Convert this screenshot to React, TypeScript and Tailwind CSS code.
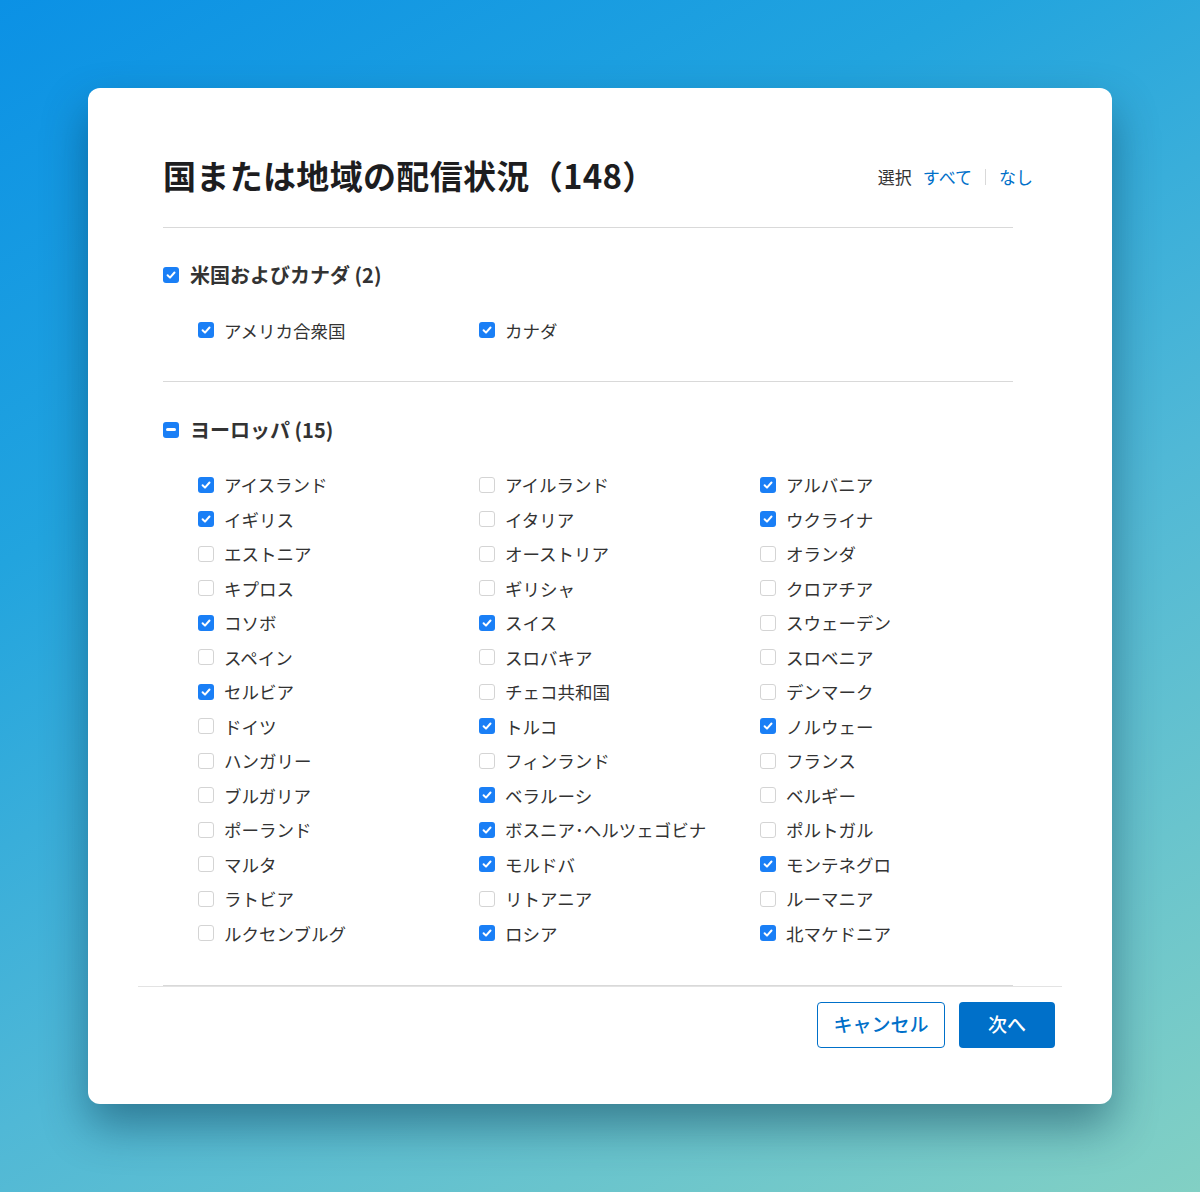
import React from "react";

type Item = { name: string; on: boolean };

const europe: Item[] = [
  { name: "アイスランド", on: true },
  { name: "アイルランド", on: false },
  { name: "アルバニア", on: true },
  { name: "イギリス", on: true },
  { name: "イタリア", on: false },
  { name: "ウクライナ", on: true },
  { name: "エストニア", on: false },
  { name: "オーストリア", on: false },
  { name: "オランダ", on: false },
  { name: "キプロス", on: false },
  { name: "ギリシャ", on: false },
  { name: "クロアチア", on: false },
  { name: "コソボ", on: true },
  { name: "スイス", on: true },
  { name: "スウェーデン", on: false },
  { name: "スペイン", on: false },
  { name: "スロバキア", on: false },
  { name: "スロベニア", on: false },
  { name: "セルビア", on: true },
  { name: "チェコ共和国", on: false },
  { name: "デンマーク", on: false },
  { name: "ドイツ", on: false },
  { name: "トルコ", on: true },
  { name: "ノルウェー", on: true },
  { name: "ハンガリー", on: false },
  { name: "フィンランド", on: false },
  { name: "フランス", on: false },
  { name: "ブルガリア", on: false },
  { name: "ベラルーシ", on: true },
  { name: "ベルギー", on: false },
  { name: "ポーランド", on: false },
  { name: "ボスニア･ヘルツェゴビナ", on: true },
  { name: "ポルトガル", on: false },
  { name: "マルタ", on: false },
  { name: "モルドバ", on: true },
  { name: "モンテネグロ", on: true },
  { name: "ラトビア", on: false },
  { name: "リトアニア", on: false },
  { name: "ルーマニア", on: false },
  { name: "ルクセンブルグ", on: false },
  { name: "ロシア", on: true },
  { name: "北マケドニア", on: true },
];

const na: Item[] = [
  { name: "アメリカ合衆国", on: true },
  { name: "カナダ", on: true },
];

function Box({ state }: { state: "on" | "off" | "mixed" }) {
  if (state === "off") {
    return (
      <span className="block w-4 h-4 shrink-0 rounded-[3px] border border-[#d4d4d4] bg-white" />
    );
  }
  return (
    <span className="flex items-center justify-center w-4 h-4 shrink-0 rounded-[3px] bg-[#1a7ff6]">
      {state === "on" ? (
        <svg width="12" height="12" viewBox="0 0 12 12" fill="none">
          <path d="M2.6 6.3 L5 8.6 L9.5 3.5" stroke="white" strokeWidth="2" strokeLinecap="round" strokeLinejoin="round" />
        </svg>
      ) : (
        <span className="block w-[10px] h-[2.5px] rounded-full bg-white" />
      )}
    </span>
  );
}

function Section({ title, state, items, last }: { title: string; state: "on" | "mixed"; items: Item[]; last?: boolean }) {
  return (
    <div className={`w-[850px] border-b border-[#d9d9d9] ${last ? "pt-[34px] pb-[34px]" : "pt-[33px] pb-[33px]"}`}>
      <div className="flex items-center gap-[11px] h-7">
        <Box state={state} />
        <span className="text-[20px] font-bold text-[#333333] leading-7">{title}</span>
      </div>
      <div className="grid grid-cols-[281px_281px_281px] pl-[35px] mt-6">
        {items.map((it) => (
          <div key={it.name} className="flex items-center gap-[10px] h-[34.5px]">
            <Box state={it.on ? "on" : "off"} />
            <span className="text-[17.5px] text-[#333333] leading-none whitespace-nowrap">{it.name}</span>
          </div>
        ))}
      </div>
    </div>
  );
}

export default function App() {
  return (
    <div
      className="min-h-[1192px] w-full pt-[88px] pb-[88px] bg-[linear-gradient(150deg,#0b91e5_0%,#22a4de_30%,#50b8d6_60%,#82d0c4_100%)]"
      style={{ fontFamily: '"Noto Sans CJK JP", "Noto Sans", sans-serif' }}
    >
      <div className="mx-auto w-[1024px] h-[1016px] bg-white rounded-[12px] shadow-[0_22px_45px_rgba(0,45,70,0.45)] flex flex-col">
        <div className="pl-[75px] pr-[79px] pt-[67px]">
          <div className="flex items-center justify-between h-10">
            <h1 className="text-[33px] font-bold text-[#1d1d1f] leading-10 tracking-[0.01em]">国または地域の配信状況（148）</h1>
            <div className="flex items-center text-[17px] mt-1">
              <span className="text-[#333333]">選択</span>
              <span className="ml-[11px] text-[#0070c9]">すべて</span>
              <span className="mx-[13px] w-px h-[16px] bg-[#d9d9d9]" />
              <span className="text-[#0070c9]">なし</span>
            </div>
          </div>
          <div className="w-[850px] h-px bg-[#d9d9d9] mt-[32px]" />
        </div>
        <div className="pl-[75px]">
          <Section title="米国およびカナダ (2)" state="on" items={na} />
          <Section title="ヨーロッパ (15)" state="mixed" items={europe} last />
        </div>
        <div className="mx-[50px] border-t border-[#e3e3e3] pt-[15px] flex justify-end gap-[14px] pr-[7px]">
          <button className="w-[128px] h-[46px] rounded-[4px] border border-[#0070c9] bg-white text-[#0070c9] text-[19px] font-medium">
            キャンセル
          </button>
          <button className="w-[96px] h-[46px] rounded-[4px] bg-[#0070c9] text-white text-[19px] font-medium">
            次へ
          </button>
        </div>
      </div>
    </div>
  );
}
